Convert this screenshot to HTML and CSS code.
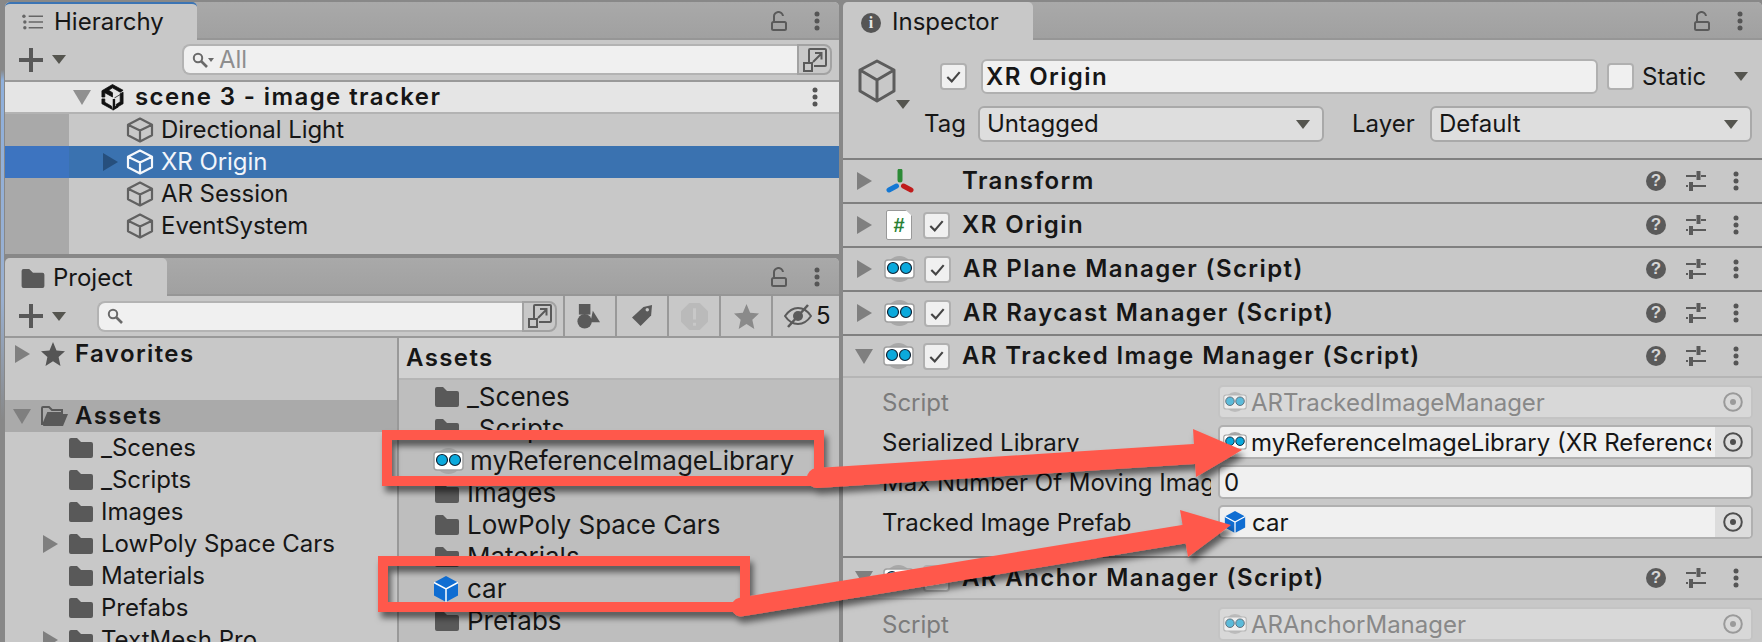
FILE: index.html
```html
<!DOCTYPE html>
<html lang="en">
<head>
<meta charset="utf-8">
<title>Unity Editor</title>
<link rel="stylesheet" href="styles.css">
</head>
<body>
<svg class="defs" aria-hidden="true">
  <symbol id="cube" viewBox="0 0 28 28"><path d="M14 2.500 26 8.700V19.300L14 25.500 2 19.300V8.700ZM2 8.700 14 14.500 26 8.700M14 14.500V25.500" fill="none" stroke="currentColor" stroke-width="2.200" stroke-linejoin="round"/></symbol>
  <symbol id="cube-big" viewBox="0 0 40 44"><path d="M20 2 37 11V32L20 42 3 32V11ZM3 11 20 21 37 11M20 21V42" fill="none" stroke="currentColor" stroke-width="3" stroke-linejoin="round"/></symbol>
  <symbol id="folder" viewBox="0 0 24 20"><path d="M0 2a2 2 0 0 1 2-2h6l4 4h10a2 2 0 0 1 2 2v12a2 2 0 0 1-2 2H2a2 2 0 0 1-2-2z" fill="#595959"/></symbol>
  <symbol id="folder-open" viewBox="0 0 28 20"><path d="M1 19V2a1 1 0 0 1 1-1h6l3 3h10v3H7L2 19" fill="none" stroke="#595959" stroke-width="2"/><path d="M7 8h20l-5 12H2z" fill="#595959"/></symbol>
  <symbol id="bluecube" viewBox="0 0 26 26"><path d="M13 0 25 6.500V19.500L13 26 1 19.500V6.500Z" fill="#0f6dd2"/><path d="M1 6.500 13 13 25 6.500M13 13V26" fill="none" stroke="#fff" stroke-width="1.500"/></symbol>
  <symbol id="ar" viewBox="0 0 31 26"><ellipse cx="15.500" cy="13" rx="13" ry="13" fill="#a8a8a8"/><rect x="1" y="4" width="29" height="18" rx="3" fill="#fff" stroke="#a0a0a0" stroke-width="1.500"/><circle cx="9" cy="12" r="5.500" fill="#0ba9dc" stroke="#123" stroke-width="1.200"/><circle cx="22" cy="12" r="5.500" fill="#0ba9dc" stroke="#123" stroke-width="1.200"/></symbol>
  <symbol id="check" viewBox="0 0 26 26"><path d="M6 13.500 11 18.500 20 8" fill="none" stroke="#444" stroke-width="2.400"/></symbol>
  <symbol id="dots" viewBox="0 0 6 20"><circle cx="3" cy="3" r="2.500" fill="currentColor"/><circle cx="3" cy="10" r="2.500" fill="currentColor"/><circle cx="3" cy="17" r="2.500" fill="currentColor"/></symbol>
  <symbol id="lock" viewBox="0 0 16 20"><path d="M3 10V6a4.500 4.500 0 0 1 9-1" fill="none" stroke="#5a5a5a" stroke-width="2"/><rect x="1" y="11" width="14" height="8" rx="1.500" fill="none" stroke="#5a5a5a" stroke-width="2"/></symbol>
  <symbol id="sliders" viewBox="0 0 20 20"><path d="M0 5H10M15 5H20M0 15H2M7 15H20" fill="none" stroke="#5a5a5a" stroke-width="2"/><path d="M12.500 0v9M5 11v9" stroke="#5a5a5a" stroke-width="4"/></symbol>
  <symbol id="target" viewBox="0 0 20 20"><circle cx="10" cy="10" r="8.800" fill="none" stroke="currentColor" stroke-width="2"/><circle cx="10" cy="10" r="3" fill="currentColor"/></symbol>
  <symbol id="popout" viewBox="0 0 24 24"><path d="M6 14V2a1 1 0 0 1 1-1h15a1 1 0 0 1 1 1v15a1 1 0 0 1-1 1H11" fill="none" stroke="#5a5a5a" stroke-width="2"/><rect x="1" y="15" width="8" height="8" fill="none" stroke="#5a5a5a" stroke-width="2"/><path d="M10 14 18 6M12 5H18.500V11.500" fill="none" stroke="#5a5a5a" stroke-width="2"/></symbol>
  <symbol id="lens" viewBox="0 0 16 16"><circle cx="6" cy="6" r="4.200" fill="none" stroke="#6a6a6a" stroke-width="2"/><path d="M9 9 15 15" stroke="#6a6a6a" stroke-width="2.600"/></symbol>
  <symbol id="star" viewBox="0 0 24 24"><path d="M12 0 15.500 8.500 24 9.200 17.600 15 19.500 24 12 19.300 4.500 24 6.400 15 0 9.200 8.500 8.500Z" fill="currentColor"/></symbol>
</svg>

<div class="left">
  <section class="panel hierarchy">
    <div class="tabstrip">
      <div class="tab tab-h blue-top">
        <svg class="ic-list" viewBox="0 0 22 16"><path d="M7 2H22M7 8H22M7 14H22" stroke="#666" stroke-width="1.600"/><circle cx="2" cy="2" r="1.800" fill="#666"/><circle cx="3" cy="8" r="1.800" fill="#666"/><circle cx="3" cy="14" r="1.800" fill="#666"/></svg>
        <span>Hierarchy</span>
      </div>
      <div class="strip-tools"><svg class="ic-lock"><use href="#lock"/></svg><svg class="ic-dots"><use href="#dots"/></svg></div>
    </div>
    <div class="toolbar">
      <div class="plus"></div><div class="caret"></div>
      <div class="search search-h">
        <svg class="ic-lens"><use href="#lens"/></svg><i class="mini-caret"></i><span class="search-hint">All</span>
      </div>
      <div class="popbtn"><svg class="ic-pop"><use href="#popout"/></svg></div>
    </div>
    <div class="scene-head">
      <i class="tri-down light"></i>
      <svg class="ic-unity" viewBox="0 0 26 28"><path d="M13 1 24 7 21 9 13 4.500 9 7l4 2.500V14L5 9.500V14H2V7.500ZM24 9V21L18 24.500 16.500 22 21 19V10.500ZM15 15l6-3.500M2 16H5V19.500L12 23.500 13 27 2 21Z" fill="#111" stroke="#111" stroke-width=".8"/><path d="M14.500 16V26l4-2.500" fill="none" stroke="#111" stroke-width="2.500"/></svg>
      <b class="scene-name">scene 3 - image tracker</b>
      <svg class="ic-dots end"><use href="#dots"/></svg>
    </div>
    <div class="tree">
      <div class="row"><svg class="ic-cube"><use href="#cube"/></svg><span>Directional Light</span></div>
      <div class="row selected"><i class="tri-right dark"></i><svg class="ic-cube"><use href="#cube"/></svg><span>XR Origin</span></div>
      <div class="row"><svg class="ic-cube"><use href="#cube"/></svg><span>AR Session</span></div>
      <div class="row"><svg class="ic-cube"><use href="#cube"/></svg><span>EventSystem</span></div>
    </div>
  </section>

  <section class="panel project">
    <div class="tabstrip">
      <div class="tab tab-p">
        <svg class="ic-folder-tab"><use href="#folder"/></svg>
        <span>Project</span>
      </div>
      <div class="strip-tools"><svg class="ic-lock"><use href="#lock"/></svg><svg class="ic-dots"><use href="#dots"/></svg></div>
    </div>
    <div class="toolbar toolbar-p">
      <div class="plus"></div><div class="caret"></div>
      <div class="search search-p"><svg class="ic-lens"><use href="#lens"/></svg></div>
      <div class="popbtn"><svg class="ic-pop"><use href="#popout"/></svg></div>
      <div class="filters">
        <div class="filter"><svg class="ic-filter ic-shapes" viewBox="0 0 24 26"><rect x="2" y="0" width="12" height="11" fill="#5a5a5a"/><circle cx="8" cy="18" r="7.500" fill="#5a5a5a"/><path d="M16.500 7 24 19H14Z" fill="#5a5a5a"/></svg></div>
        <div class="filter"><svg class="ic-tag" viewBox="0 0 22 24"><path d="M0 13 12 2 21 0 20 11 9 22Z" fill="#5a5a5a"/><circle cx="16" cy="5" r="1.800" fill="#c8c8c8"/></svg></div>
        <div class="filter"><svg class="ic-warn" viewBox="0 0 26 26"><path d="M8 0H18L26 8V18L18 26H8L0 18V8Z" fill="#bababa"/><path d="M13 5V16M13 19V22" stroke="#c8c8c8" stroke-width="3"/></svg></div>
        <div class="filter star"><svg class="ic-filter"><use href="#star"/></svg></div>
        <div class="filter filter-eye"><svg class="ic-eye" viewBox="0 0 28 24"><path d="M1 12C6 5 10 4 14 4s9 2 13 8c-4 6-8 8-13 8S5 18 1 12Z" fill="none" stroke="#5a5a5a" stroke-width="2"/><circle cx="14" cy="12" r="5" fill="#5a5a5a"/><path d="M4 23 24 1" stroke="#5a5a5a" stroke-width="2.500"/></svg><span>5</span></div>
      </div>
    </div>
    <div class="browser">
      <div class="tree-p">
        <div class="fav"><i class="tri-right"></i><svg class="ic-star"><use href="#star"/></svg><b>Favorites</b></div>
        <div class="assets-root"><i class="tri-down"></i><svg class="ic-fopen"><use href="#folder-open"/></svg><b>Assets</b></div>
        <div class="pf"><svg class="ic-f"><use href="#folder"/></svg><span>_Scenes</span></div>
        <div class="pf"><svg class="ic-f"><use href="#folder"/></svg><span>_Scripts</span></div>
        <div class="pf"><svg class="ic-f"><use href="#folder"/></svg><span>Images</span></div>
        <div class="pf"><i class="tri-right"></i><svg class="ic-f"><use href="#folder"/></svg><span>LowPoly Space Cars</span></div>
        <div class="pf"><svg class="ic-f"><use href="#folder"/></svg><span>Materials</span></div>
        <div class="pf"><svg class="ic-f"><use href="#folder"/></svg><span>Prefabs</span></div>
        <div class="pf"><i class="tri-right"></i><svg class="ic-f"><use href="#folder"/></svg><span>TextMesh Pro</span></div>
      </div>
      <div class="list-p">
        <div class="crumb"><b>Assets</b></div>
        <div class="li"><svg class="ic-f"><use href="#folder"/></svg><span>_Scenes</span></div>
        <div class="li"><svg class="ic-f"><use href="#folder"/></svg><span>_Scripts</span></div>
        <div class="li li-ar"><svg class="ic-ar"><use href="#ar"/></svg><span>myReferenceImageLibrary</span></div>
        <div class="li"><svg class="ic-f"><use href="#folder"/></svg><span>Images</span></div>
        <div class="li"><svg class="ic-f"><use href="#folder"/></svg><span>LowPoly Space Cars</span></div>
        <div class="li"><svg class="ic-f"><use href="#folder"/></svg><span>Materials</span></div>
        <div class="li li-car"><svg class="ic-blue"><use href="#bluecube"/></svg><span>car</span></div>
        <div class="li"><svg class="ic-f"><use href="#folder"/></svg><span>Prefabs</span></div>
      </div>
    </div>
  </section>
</div>

<section class="panel inspector">
  <div class="tabstrip">
    <div class="tab tab-i"><span class="info">i</span><span>Inspector</span></div>
    <div class="strip-tools"><svg class="ic-lock"><use href="#lock"/></svg><svg class="ic-dots"><use href="#dots"/></svg></div>
  </div>
  <div class="obj-head">
    <div class="obj-cube"><svg class="ic-bigcube"><use href="#cube-big"/></svg><div class="caret"></div></div>
    <div class="obj-rows">
      <div class="obj-row1">
        <div class="cb"><svg><use href="#check"/></svg></div>
        <div class="name-field"><b>XR Origin</b></div>
        <div class="cb"></div>
        <span class="static">Static</span>
        <div class="caret"></div>
      </div>
      <div class="obj-row2">
        <span class="tag-l">Tag</span>
        <div class="drop drop-tag"><span>Untagged</span><div class="caret"></div></div>
        <span class="layer-l">Layer</span>
        <div class="drop drop-layer"><span>Default</span><div class="caret"></div></div>
      </div>
    </div>
  </div>

  <div class="comp">
    <i class="tri-right"></i>
    <svg class="ic-tf" viewBox="0 0 28 24"><path d="M14 2V11" stroke="#2c8a36" stroke-width="5" stroke-linecap="round"/><path d="M3 21 10.500 17" stroke="#1478d4" stroke-width="5" stroke-linecap="round"/><path d="M17.500 17 25 21" stroke="#c01c1c" stroke-width="5" stroke-linecap="round"/></svg>
    <b class="comp-title">Transform</b>
    <span class="help">?</span><svg class="ic-sl"><use href="#sliders"/></svg><svg class="ic-dots"><use href="#dots"/></svg>
  </div>
  <div class="comp">
    <i class="tri-right"></i>
    <div class="doc"><span>#</span></div>
    <div class="cb cb-s"><svg><use href="#check"/></svg></div>
    <b class="comp-title">XR Origin</b>
    <span class="help">?</span><svg class="ic-sl"><use href="#sliders"/></svg><svg class="ic-dots"><use href="#dots"/></svg>
  </div>
  <div class="comp">
    <i class="tri-right"></i>
    <svg class="ic-ar"><use href="#ar"/></svg>
    <div class="cb cb-s"><svg><use href="#check"/></svg></div>
    <b class="comp-title">AR Plane Manager (Script)</b>
    <span class="help">?</span><svg class="ic-sl"><use href="#sliders"/></svg><svg class="ic-dots"><use href="#dots"/></svg>
  </div>
  <div class="comp">
    <i class="tri-right"></i>
    <svg class="ic-ar"><use href="#ar"/></svg>
    <div class="cb cb-s"><svg><use href="#check"/></svg></div>
    <b class="comp-title">AR Raycast Manager (Script)</b>
    <span class="help">?</span><svg class="ic-sl"><use href="#sliders"/></svg><svg class="ic-dots"><use href="#dots"/></svg>
  </div>
  <div class="comp comp-open">
    <i class="tri-down"></i>
    <svg class="ic-ar"><use href="#ar"/></svg>
    <div class="cb cb-s"><svg><use href="#check"/></svg></div>
    <b class="comp-title">AR Tracked Image Manager (Script)</b>
    <span class="help">?</span><svg class="ic-sl"><use href="#sliders"/></svg><svg class="ic-dots"><use href="#dots"/></svg>
  </div>
  <div class="props">
    <div class="prop off"><label>Script</label><div class="obj off-f"><svg class="ic-ar-f"><use href="#ar"/></svg><span class="val">ARTrackedImageManager</span><div class="pick"><svg><use href="#target"/></svg></div></div></div>
    <div class="prop"><label>Serialized Library</label><div class="obj"><svg class="ic-ar-f"><use href="#ar"/></svg><span class="val">myReferenceImageLibrary (XR ReferenceImageLibrary)</span><div class="pick"><svg><use href="#target"/></svg></div></div></div>
    <div class="prop"><label>Max Number Of Moving Images</label><div class="obj"><span class="val val-n">0</span></div></div>
    <div class="prop"><label>Tracked Image Prefab</label><div class="obj"><svg class="ic-blue-f"><use href="#bluecube"/></svg><span class="val">car</span><div class="pick"><svg><use href="#target"/></svg></div></div></div>
  </div>
  <div class="comp comp-open">
    <i class="tri-down"></i>
    <svg class="ic-ar"><use href="#ar"/></svg>
    <div class="cb cb-s"><svg><use href="#check"/></svg></div>
    <b class="comp-title">AR Anchor Manager (Script)</b>
    <span class="help">?</span><svg class="ic-sl"><use href="#sliders"/></svg><svg class="ic-dots"><use href="#dots"/></svg>
  </div>
  <div class="props">
    <div class="prop off"><label>Script</label><div class="obj off-f"><svg class="ic-ar-f"><use href="#ar"/></svg><span class="val">ARAnchorManager</span><div class="pick"><svg><use href="#target"/></svg></div></div></div>
  </div>
</section>

<svg class="annot" viewBox="0 0 1762 642" aria-hidden="true">
  <defs><filter id="sh" x="-10%" y="-30%" width="120%" height="170%"><feDropShadow dx="3" dy="6" stdDeviation="3" flood-color="#000" flood-opacity=".55"/></filter></defs>
  <g filter="url(#sh)">
    <rect x="387" y="435" width="432" height="46" fill="none" stroke="#ff594c" stroke-width="10"/>
    <rect x="383" y="561" width="362" height="46" fill="none" stroke="#ff594c" stroke-width="10"/>
    <path d="M817 478 1194 454" stroke="#ff594c" stroke-width="20" stroke-linecap="round"/>
    <path d="M1193 429 1242 450 1196 477Z" fill="#ff594c"/>
    <path d="M741 607 1185 534" stroke="#ff594c" stroke-width="19" stroke-linecap="round"/>
    <path d="M1180 510 1231 525 1188 557Z" fill="#ff594c"/>
  </g>
</svg>
</body>
</html>
```
FILE: styles.css
```css
* { box-sizing: border-box; }
html, body { margin: 0; height: 100%; }
body {
  width: 1762px; height: 642px; overflow: hidden; position: relative;
  display: flex; gap: 4px; padding: 2px 0 0 5px;
  background: linear-gradient(#888 70px, #8fb0dc 80px, #9ab0d0 300px, #888 420px) 1px 0 / 3px 100% no-repeat, #888;
  font: 24px/1.2 Inter, "Liberation Sans", sans-serif; color: #161616;
}
.defs { position: absolute; width: 0; height: 0; }
i { display: block; flex: none; }
b { font-weight: 600; letter-spacing: 1.4px; }
svg { display: block; flex: none; }

.left { width: 834px; flex: none; display: flex; flex-direction: column; gap: 4px; }
.panel { background: #c8c8c8; overflow: hidden; display: flex; flex-direction: column; border-radius: 5px 5px 0 0; }
.hierarchy { height: 252px; flex: none; }
.project { height: 384px; flex: none; }
.inspector { width: 919px; flex: none; height: 640px; }

.tabstrip { height: 38px; flex: none; display: flex; justify-content: space-between; background: linear-gradient(#a9a9a9, #a0a0a0); box-shadow: inset 0 -2px #969696; }
.tab { display: flex; align-items: center; height: 38px; padding-top: 3px; background: #c8c8c8; border-radius: 5px 5px 0 0; }
.blue-top { border-top: 2px solid #3b74b4; padding-top: 0; }
.tab-h { width: 192px; padding-left: 17px; gap: 11px; }
.tab-p { width: 162px; padding-left: 16px; gap: 8px; }
.tab-i { width: 190px; padding-left: 18px; gap: 11px; }
.ic-list { width: 21px; height: 16px; }
.ic-folder-tab { width: 24px; height: 19px; }
.info { width: 20px; height: 20px; border-radius: 50%; background: #555; color: #e6e6e6; font: 800 16px/20px "Liberation Serif", serif; text-align: center; }
.strip-tools { display: flex; align-items: center; padding: 0 19px 0 0; gap: 27px; }
.ic-lock { width: 16px; height: 20px; }
.ic-dots { width: 6px; height: 20px; color: #555; }

.toolbar { height: 42px; flex: none; display: flex; align-items: center; padding: 3px 7px 4px 14px; border-bottom: 2px solid #999; }
.plus { width: 24px; height: 24px; flex: none; background: linear-gradient(#585858,#585858) center/100% 4px no-repeat, linear-gradient(#585858,#585858) center/4px 100% no-repeat; }
.caret { width: 0; height: 0; flex: none; border: 7px solid transparent; border-top: 9px solid #55554f; border-bottom: 0; }
.toolbar .caret { margin-left: 9px; }
.search { height: 31px; display: flex; align-items: center; background: #f0f0f0; border: 2px solid #b3b3b3; border-right: 0; border-radius: 8px 0 0 8px; }
.search-h { width: 615px; margin-left: 116px; padding-left: 8px; }
.search-p { width: 425px; margin-left: 31px; padding-left: 8px; }
.ic-lens { width: 16px; height: 16px; }
.mini-caret { border: 3px solid transparent; border-top: 4px solid #6a6a6a; border-bottom: 0; }
.search-hint { color: #8e8e8e; margin-left: 5px; padding-top: 2px; }
.popbtn { width: 35px; height: 31px; flex: none; display: flex; align-items: center; justify-content: center; background: #c8c8c8; border: 2px solid #a2a2a2; border-radius: 0 8px 8px 0; }
.ic-pop { width: 24px; height: 24px; }

.toolbar-p { padding: 0 0 0 14px; }
.filters { display: flex; align-self: stretch; margin-left: 6px; flex: 1; }
.filter { width: 52px; display: flex; align-items: center; justify-content: center; border-left: 2px solid #999; }
.filter-eye { flex: 1; gap: 4px; justify-content: flex-start; padding-left: 11px; }
.ic-filter { width: 25px; height: 25px; }
.ic-shapes { margin-right: 4px; }
.ic-tag { width: 21px; height: 23px; }
.ic-warn { width: 27px; height: 27px; }
.star { color: #8a8a8a; }
.ic-eye { width: 28px; height: 24px; }

.scene-head { height: 32px; flex: none; display: flex; align-items: center; background: #e5e5e5; border-bottom: 2px solid #b3b3b3; padding-left: 68px; }
.tri-down { width: 0; height: 0; border: 9px solid transparent; border-top: 15px solid #7f7f7f; border-bottom: 0; }
.tri-right { width: 0; height: 0; border: 9px solid transparent; border-left: 15px solid #7f7f7f; border-right: 0; }
.light { border-top-color: #909090; }
.dark { border-left-color: #264f7d; }
.ic-unity { width: 25px; height: 28px; margin-left: 9px; }
.scene-name { margin-left: 10px; flex: 1; }
.end { margin: 0 21px 0 0; }

.tree { flex: 1; background: linear-gradient(90deg, #a9a9a9 64px, #c8c8c8 64px); }
.row { height: 32px; display: flex; align-items: center; padding-left: 121px; gap: 7px; position: relative; letter-spacing: -.05px; }
.selected { background: linear-gradient(90deg, #3d74c0 64px, #3a72b0 64px); color: #f2f5fa; }
.selected .tri-right { position: absolute; left: 98px; top: 7px; }
.ic-cube { width: 28px; height: 28px; color: #616161; }
.selected .ic-cube { color: #f5f8fc; }

.browser { flex: 1; display: flex; min-height: 0; }
.tree-p { width: 394px; flex: none; border-right: 2px solid #999; }
.fav, .assets-root, .pf { height: 32px; display: flex; align-items: center; position: relative; }
.fav { padding-left: 36px; gap: 10px; margin-bottom: 30px; }
.fav .tri-right { position: absolute; left: 10px; top: 7px; }
.assets-root { background: #aaa; padding-left: 36px; }
.assets-root .tri-down { position: absolute; left: 8px; top: 9px; }
.ic-star { width: 24px; height: 24px; color: #555; }
.ic-fopen { width: 28px; height: 20px; }
.assets-root b { margin-left: 6px; }
.pf { padding-left: 64px; gap: 8px; }
.pf .tri-right { position: absolute; left: 38px; top: 7px; }
.ic-f { width: 24px; height: 20px; }

.list-p { flex: 1; background: #bebebe; min-width: 0; }
.crumb { height: 42px; padding: 0 0 0 7px; background: #d1d1d1; display: flex; align-items: center; border-bottom: 2px solid #b5b5b5; margin-bottom: 1px; }
.li { height: 32px; display: flex; align-items: center; padding-left: 36px; gap: 8px; font-size: 26px; }
.li-ar { padding-left: 34px; gap: 6px; }
.li-car { padding-left: 34px; }
.ic-ar { width: 31px; height: 26px; }
.ic-blue { width: 26px; height: 26px; }

.obj-head { height: 120px; flex: none; display: flex; border-bottom: 2px solid #808080; padding: 19px 0 0 14px; }
.obj-cube { width: 67px; flex: none; position: relative; }
.ic-bigcube { width: 40px; height: 44px; color: #5c5c5c; }
.obj-cube .caret { position: absolute; left: 39px; top: 41px; }
.obj-rows { flex: 1; }
.obj-row1 { height: 35px; display: flex; align-items: center; padding-left: 16px; }
.cb { width: 27px; height: 27px; flex: none; background: #f0f0f0; border: 2px solid #b0b0b0; border-radius: 4px; }
.cb svg { width: 23px; height: 23px; }
.name-field { width: 617px; height: 35px; margin-left: 14px; padding: 2px 0 0 3px; background: #f0f0f0; border: 2px solid #b0b0b0; border-radius: 6px; display: flex; align-items: center; }
.name-field + .cb { margin-left: 9px; }
.static { margin-left: 8px; padding-top: 2px; flex: 1; }
.obj-row1 .caret { margin-right: 14px; }
.obj-row2 { display: flex; align-items: center; height: 36px; margin-top: 12px; }
.tag-l { width: 54px; }
.drop { height: 36px; display: flex; align-items: center; justify-content: space-between; background: #dedede; border: 2px solid #a9a9a9; border-radius: 6px; padding: 0 12px 0 7px; }
.drop-tag { width: 346px; }
.layer-l { margin-left: 28px; width: 78px; }
.drop-layer { width: 322px; }

.comp { height: 44px; flex: none; display: flex; align-items: center; border-bottom: 2px solid #808080; padding: 0 23px 0 14px; }
.comp > svg.ic-ar { margin-left: 12px; }
.doc { width: 26px; height: 30px; margin-left: 14px; background: #fff; border: 1px solid #999; border-radius: 2px; clip-path: polygon(0 0, 75% 0, 100% 20%, 100% 100%, 0 100%); text-align: center; color: #2a7f33; font: 700 20px/28px "Liberation Sans", sans-serif; flex: none; }
.ic-tf { width: 28px; height: 24px; margin-left: 14px; margin-right: 48px; }
.cb-s { margin-left: 9px; margin-right: 12px; }
.doc + .cb-s { margin-left: 11px; }
.comp-title { flex: 1; }
.help { width: 20px; height: 20px; border-radius: 50%; background: #5a5a5a; color: #d6d6d6; font: 700 17px/20px "Liberation Sans", sans-serif; text-align: center; flex: none; }
.ic-sl { width: 20px; height: 20px; margin: 0 0 0 20px; }
.comp .ic-dots { margin: 0 0 0 27px; }
.comp-open { height: 42px; border-bottom: 2px solid #b5b5b5; padding-left: 12px; }
.comp-open > svg.ic-ar { margin-left: 10px; }
.props { padding: 7px 9px 17px 39px; display: flex; flex-direction: column; gap: 6px; border-bottom: 2px solid #808080; flex: none; }
.prop { height: 34px; display: flex; align-items: center; }
.prop label { width: 329px; margin-right: 7px; padding-top: 2px; flex: none; white-space: nowrap; overflow: hidden; }
.off label { color: #7b7b7b; }
.obj { width: 535px; height: 34px; flex: none; display: flex; align-items: center; background: #f0f0f0; border: 2px solid #b0b0b0; border-radius: 5px; padding-left: 3px; gap: 4px; overflow: hidden; }
.off-f { background: #d8d8d8; border-color: #c4c4c4; color: #888; }
.off-f .ic-ar-f { opacity: .6; }
.val { flex: 1; padding-top: 2px; white-space: nowrap; overflow: hidden; min-width: 0; }
.val-n { padding-left: 1px; }
.ic-ar-f { width: 24px; height: 22px; }
.ic-blue-f { width: 22px; height: 22px; margin: 0 2px 0 1px; }
.pick { width: 36px; height: 34px; flex: none; background: #dcdcdc; display: flex; align-items: center; justify-content: center; color: #4e4e4e; }
.off-f .pick { background: #d8d8d8; color: #9a9a9a; }
.pick svg { width: 20px; height: 20px; }

.annot { position: absolute; left: 0; top: 0; width: 1762px; height: 642px; pointer-events: none; }
```
